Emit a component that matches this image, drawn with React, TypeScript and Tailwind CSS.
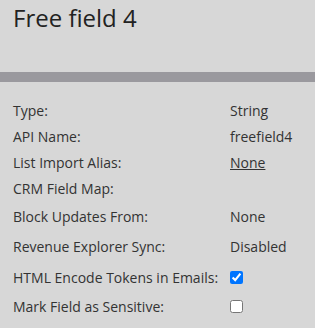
const rows: { label: string; value?: string; link?: boolean; check?: boolean; h: string }[] = [
  { label: 'Type:', value: 'String', h: 'h-[26px]' },
  { label: 'API Name:', value: 'freefield4', h: 'h-[26px]' },
  { label: 'List Import Alias:', value: 'None', link: true, h: 'h-[26px]' },
  { label: 'CRM Field Map:', value: '', h: 'h-[27px]' },
  { label: 'Block Updates From:', value: 'None', h: 'h-[29px]' },
  { label: 'Revenue Explorer Sync:', value: 'Disabled', h: 'h-[31px]' },
  { label: 'HTML Encode Tokens in Emails:', check: true, h: 'h-[30px]' },
  { label: 'Mark Field as Sensitive:', check: false, h: 'h-[29px]' },
];

export default function App() {
  return (
    <div
      className="w-[315px] h-[328px] bg-[#d7d7d7] text-[#333333] overflow-hidden"
      style={{ fontFamily: '"Open Sans", sans-serif' }}
    >
      <div className="h-[72px] px-[13px] pt-[1px]">
        <h1 className="text-[24px] leading-[33px] text-[#222222]">Free field 4</h1>
      </div>
      <div className="h-[10px] bg-[#9a999e]" />
      <div className="pt-[15px] px-[13px]">
        {rows.map((r) => (
          <div key={r.label} className={`flex items-center text-[14px] ${r.h}`}>
            <div className="w-[217px] shrink-0">{r.label}</div>
            <div className="flex items-center">
              {r.check === undefined ? (
                r.link ? (
                  <span className="underline">{r.value}</span>
                ) : (
                  <span>{r.value}</span>
                )
              ) : (
                <input
                  type="checkbox"
                  defaultChecked={r.check}
                  className="m-0 w-[13px] h-[13px]"
                />
              )}
            </div>
          </div>
        ))}
      </div>
    </div>
  );
}
